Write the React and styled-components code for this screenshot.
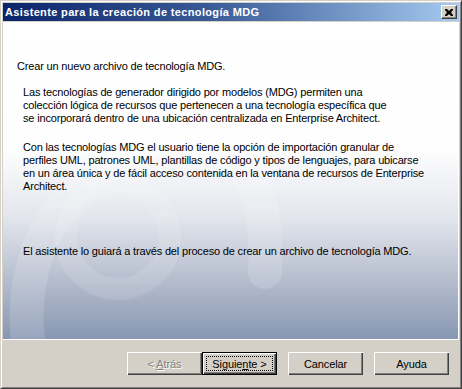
import React from "react";
import styled, { createGlobalStyle } from "styled-components";

const Global = createGlobalStyle`
  html, body { margin: 0; padding: 0; background: #d4d0c8; }
  body { font-family: "Liberation Sans", Arial, sans-serif; font-size: 11px; color: #000; }
`;

const Window = styled.div`
  width: 462px;
  height: 389px;
  box-sizing: border-box;
  background: #d4d0c8;
  border-top: 1px solid #d4d0c8;
  border-left: 1px solid #d4d0c8;
  border-right: 1px solid #404040;
  border-bottom: 1px solid #404040;
  box-shadow: inset 1px 1px 0 #ffffff, inset -1px -1px 0 #808080;
  padding: 2px;
  display: flex;
  flex-direction: column;
`;

const TitleBar = styled.div`
  height: 18px;
  flex: none;
  display: flex;
  align-items: center;
  justify-content: space-between;
  padding: 0 2px 0 2px;
  background: linear-gradient(to right, #0a246a 0%, #3a5a96 45%, #a6caf0 100%);
  margin-bottom: 1px;
`;

const Title = styled.span`
  color: #ffffff;
  font-weight: bold;
  font-size: 11px;
  white-space: nowrap;
  letter-spacing: 0.35px;
`;

const CloseButton = styled.div`
  width: 16px;
  height: 14px;
  box-sizing: border-box;
  background: #d4d0c8;
  border-top: 1px solid #ffffff;
  border-left: 1px solid #ffffff;
  border-right: 1px solid #404040;
  border-bottom: 1px solid #404040;
  box-shadow: inset -1px -1px 0 #808080;
  display: flex;
  align-items: center;
  justify-content: center;
`;

const Panel = styled.div`
  position: relative;
  height: 318px;
  flex: none;
  overflow: hidden;
  border-right: 1px solid #ffffff;
  border-bottom: 1px solid #ffffff;
  background: linear-gradient(to bottom, #ffffff 0%, #fefefe 40%, #e2e5ec 62%, #b4bccd 82%, #8797b2 100%);
  padding: 38px 0 0 14px;
  box-sizing: border-box;
`;

const Watermark = styled.svg`
  position: absolute;
  left: 0;
  top: 0;
  pointer-events: none;
`;

const Content = styled.div`
  position: relative;
  display: flex;
  flex-direction: column;
  letter-spacing: -0.17px;
`;

const Heading = styled.div`
  line-height: 13px;
  white-space: nowrap;
  margin-bottom: 13px;
`;

const Paragraph = styled.div`
  padding-left: 6px;
  line-height: 13px;
  white-space: nowrap;
  margin-bottom: ${(p) => p.$gap}px;
`;

const Line = styled.div``;

const Footer = styled.div`
  flex: 1;
  display: flex;
  align-items: flex-start;
  justify-content: flex-end;
  padding: 12px 10px 0 0;
`;

const Button = styled.button`
  width: 75px;
  height: 23px;
  box-sizing: border-box;
  margin-left: ${(p) => p.$gap}px;
  padding: 0;
  font-family: "Liberation Sans", Arial, sans-serif;
  font-size: 11px;
  letter-spacing: -0.1px;
  color: ${(p) => (p.disabled ? "#808080" : "#000000")};
  text-shadow: ${(p) => (p.disabled ? "1px 1px 0 #ffffff" : "none")};
  background: #d4d0c8;
  border: ${(p) => (p.$default ? "1px solid #000000" : "none")};
  box-shadow: inset 1px 1px 0 #ffffff, inset -1px -1px 0 #404040, inset -2px -2px 0 #808080;
  display: flex;
  align-items: center;
  justify-content: center;
  position: relative;
`;

const Focus = styled.span`
  position: absolute;
  left: 3px;
  top: 3px;
  right: 3px;
  bottom: 3px;
  border: 1px dotted #000;
`;

const Label = styled.span`
  position: relative;
  white-space: nowrap;
`;

export default function App() {
  return (
    <>
      <Global />
      <Window>
        <TitleBar>
          <Title>Asistente para la creación de tecnología MDG</Title>
          <CloseButton>
            <svg width="8" height="7" viewBox="0 0 8 7">
              <path d="M0 0h2l2 2 2-2h2v1L6 3.5 8 6v1H6L4 5 2 7H0V6l2-2.5L0 1z" fill="#000" />
            </svg>
          </CloseButton>
        </TitleBar>
        <Panel>
          <Watermark width="456" height="318" viewBox="0 0 456 318">
            <g fill="none" stroke="#ffffff" strokeLinecap="round">
              <path d="M25 320 C 15 230, 60 150, 150 122 C 220 102, 268 140, 262 250" strokeWidth="34" opacity="0.14" />
              <circle cx="115" cy="215" r="52" strokeWidth="22" opacity="0.12" />
            </g>
          </Watermark>
          <Content>
            <Heading>Crear un nuevo archivo de tecnología MDG.</Heading>
            <Paragraph $gap={16}>
              <Line>Las tecnologías de generador dirigido por modelos (MDG) permiten una</Line>
              <Line>colección lógica de recursos que pertenecen a una tecnología específica que</Line>
              <Line>se incorporará dentro de una ubicación centralizada en Enterprise Architect.</Line>
            </Paragraph>
            <Paragraph $gap={52}>
              <Line>Con las tecnologías MDG el usuario tiene la opción de importación granular de</Line>
              <Line>perfiles UML, patrones UML, plantillas de código y tipos de lenguajes, para ubicarse</Line>
              <Line>en un área única y de fácil acceso contenida en la ventana de recursos de Enterprise</Line>
              <Line>Architect.</Line>
            </Paragraph>
            <Paragraph $gap={0}>
              <Line>El asistente lo guiará a través del proceso de crear un archivo de tecnología MDG.</Line>
            </Paragraph>
          </Content>
        </Panel>
        <Footer>
          <Button disabled $gap={0}>
            <Label>&lt; <u>A</u>trás</Label>
          </Button>
          <Button $default $gap={0}>
            <Focus />
            <Label>Siguie<u>n</u>te &gt;</Label>
          </Button>
          <Button $gap={11}>
            <Label>Cancelar</Label>
          </Button>
          <Button $gap={11}>
            <Label>Ayuda</Label>
          </Button>
        </Footer>
      </Window>
    </>
  );
}
